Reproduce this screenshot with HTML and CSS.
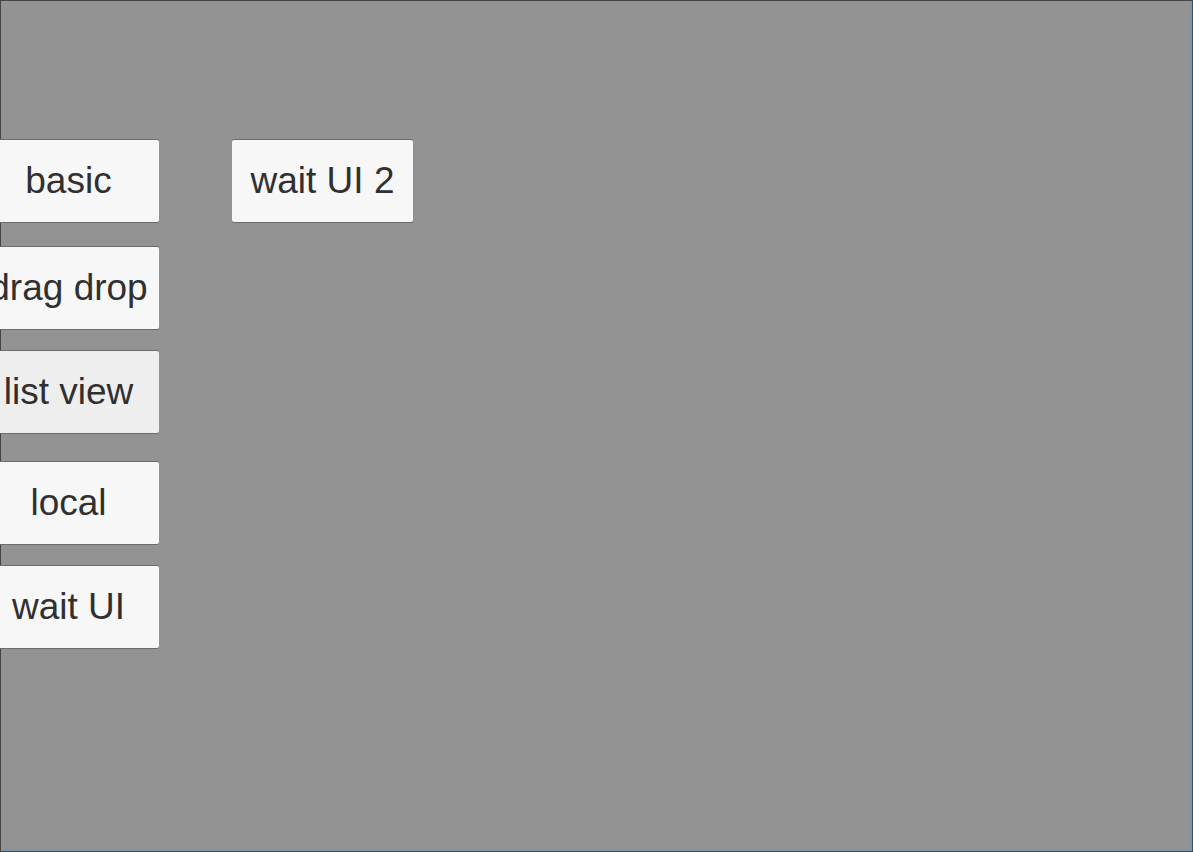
FILE: index.html
```html
<!DOCTYPE html>
<html lang="en">
<head>
<meta charset="utf-8">
<title>UI demos</title>
<link rel="stylesheet" href="styles.css">
</head>
<body>
<main class="stage">
  <nav class="menu" aria-label="Demos">
    <div class="column">
      <button class="item" type="button">basic</button>
      <button class="item" type="button">drag drop</button>
      <button class="item item-active" type="button">list view</button>
      <button class="item item-spaced" type="button">local</button>
      <button class="item" type="button">wait UI</button>
    </div>
    <div class="column">
      <button class="item" type="button">wait UI 2</button>
    </div>
  </nav>
</main>
</body>
</html>
```
FILE: styles.css
```css
* {
  box-sizing: border-box;
}

body {
  margin: 0;
  background: #939393;
  font-family: "Liberation Sans", Arial, sans-serif;
}

.stage {
  min-height: 100vh;
  padding-top: 140px;
  overflow: hidden;
  box-shadow:
    inset 1px 1px #454545,
    inset -1px -1px #2c5272,
    inset -3px -3px #8494a2;
}

.menu {
  display: flex;
  align-items: flex-start;
  gap: 73px;
  margin-left: -22px;
}

.column {
  display: flex;
  flex-direction: column;
  gap: 22px;
}

.item {
  width: 181px;
  height: 82px;
  padding: 0;
  border: 0;
  border-radius: 2px;
  background: #f7f7f7;
  box-shadow: 0 1px #6c6c6c, 0 -1px #6c6c6c;
  color: #303030;
  font: 37px/42px "Liberation Sans", Arial, sans-serif;
  white-space: nowrap;
}

.item:first-child {
  margin-bottom: 3px;
}

.item-active {
  background: #eeeeee;
}

.item-spaced {
  margin-top: 7px;
}
```
